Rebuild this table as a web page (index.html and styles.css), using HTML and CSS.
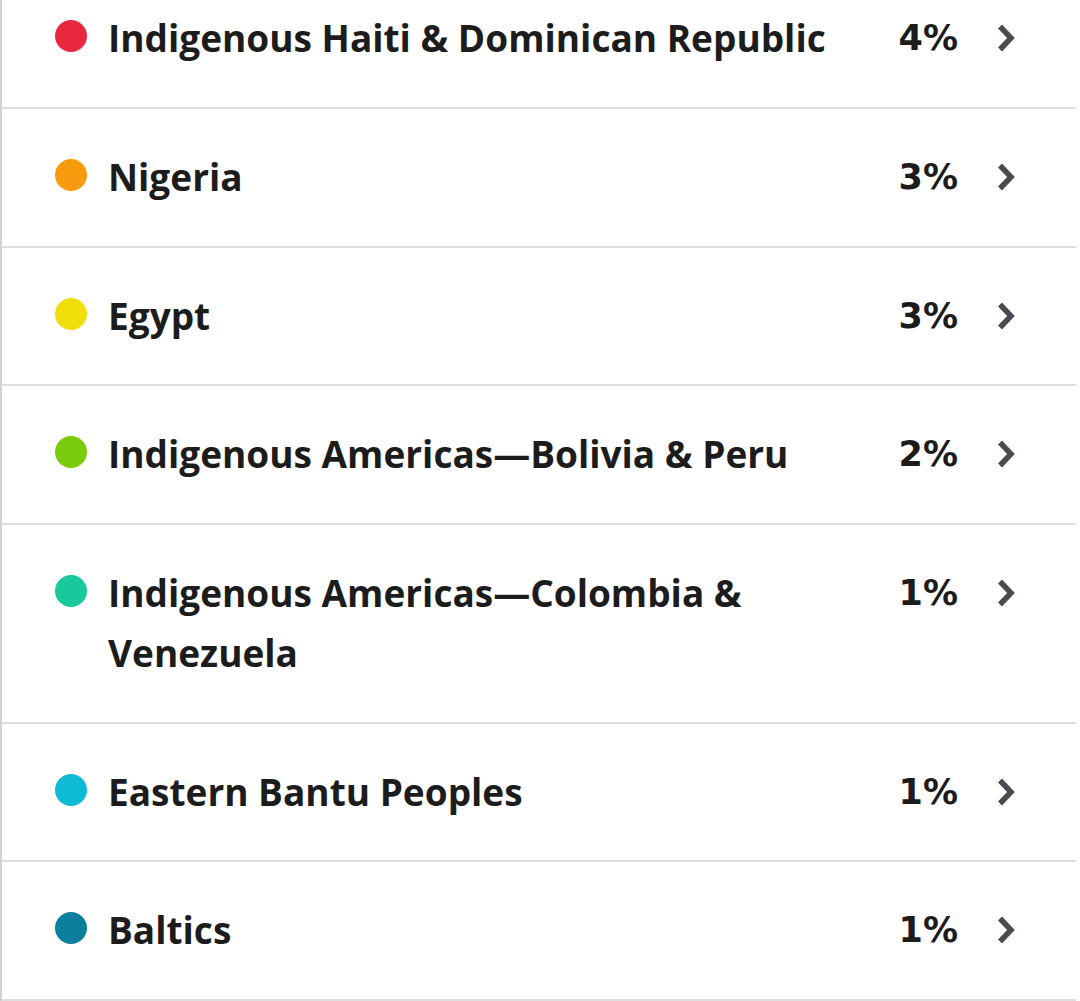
FILE: index.html
```html
<!DOCTYPE html>
<html>
<head>
<meta charset="utf-8">
<link rel="stylesheet" href="styles.css">
</head>
<body>
<div class="list">
  <div class="row"><span class="dot red"></span><span class="name">Indigenous Haiti &amp; Dominican Republic</span><span class="pct">4%</span><svg class="chev" viewBox="0 0 18 28"><path d="M3 2.5 L14 14 L3 25.5"/></svg></div>
  <div class="row"><span class="dot orange"></span><span class="name">Nigeria</span><span class="pct">3%</span><svg class="chev" viewBox="0 0 18 28"><path d="M3 2.5 L14 14 L3 25.5"/></svg></div>
  <div class="row"><span class="dot yellow"></span><span class="name">Egypt</span><span class="pct">3%</span><svg class="chev" viewBox="0 0 18 28"><path d="M3 2.5 L14 14 L3 25.5"/></svg></div>
  <div class="row"><span class="dot green"></span><span class="name">Indigenous Americas—Bolivia &amp; Peru</span><span class="pct">2%</span><svg class="chev" viewBox="0 0 18 28"><path d="M3 2.5 L14 14 L3 25.5"/></svg></div>
  <div class="row"><span class="dot teal"></span><span class="name">Indigenous Americas—Colombia &amp; Venezuela</span><span class="pct">1%</span><svg class="chev" viewBox="0 0 18 28"><path d="M3 2.5 L14 14 L3 25.5"/></svg></div>
  <div class="row"><span class="dot cyan"></span><span class="name">Eastern Bantu Peoples</span><span class="pct">1%</span><svg class="chev" viewBox="0 0 18 28"><path d="M3 2.5 L14 14 L3 25.5"/></svg></div>
  <div class="row"><span class="dot blue"></span><span class="name">Baltics</span><span class="pct">1%</span><svg class="chev" viewBox="0 0 18 28"><path d="M3 2.5 L14 14 L3 25.5"/></svg></div>
</div>
</body>
</html>
```
FILE: styles.css
```css
html, body {
  margin: 0;
  padding: 0;
  background: #fff;
  overflow: hidden;
}
.list {
  margin-top: -29.67px;
  border-left: 2px solid #d2d2d2;
  height: 1040px;
}
.row {
  display: flex;
  align-items: flex-start;
  padding: 38px 0 38.67px 53px;
  margin-right: 4px;
  border-bottom: 2px solid #dedede;
  font-family: "Open Sans", sans-serif;
  font-weight: 700;
  font-size: 37px;
  line-height: 60px;
  color: #1c1c1c;
}
.dot {
  flex: none;
  width: 32px;
  height: 32px;
  border-radius: 50%;
  margin-top: 12px;
}
.red { background: #e9283f; }
.orange { background: #f89b0e; }
.yellow { background: #f1dd0a; }
.green { background: #79cb0b; }
.teal { background: #17c99b; }
.cyan { background: #0eb9d4; }
.blue { background: #0d7f9e; }
.name {
  flex: 1;
  margin-left: 21px;
  padding-right: 40px;
}
.pct {
  flex: none;
  font-family: "DejaVu Sans", sans-serif;
  font-size: 35px;
  text-align: right;
}
.chev {
  flex: none;
  width: 18px;
  height: 28px;
  margin: 16px 61px 0 39px;
  fill: none;
  stroke: #474c52;
  stroke-width: 5.5;
}
```
